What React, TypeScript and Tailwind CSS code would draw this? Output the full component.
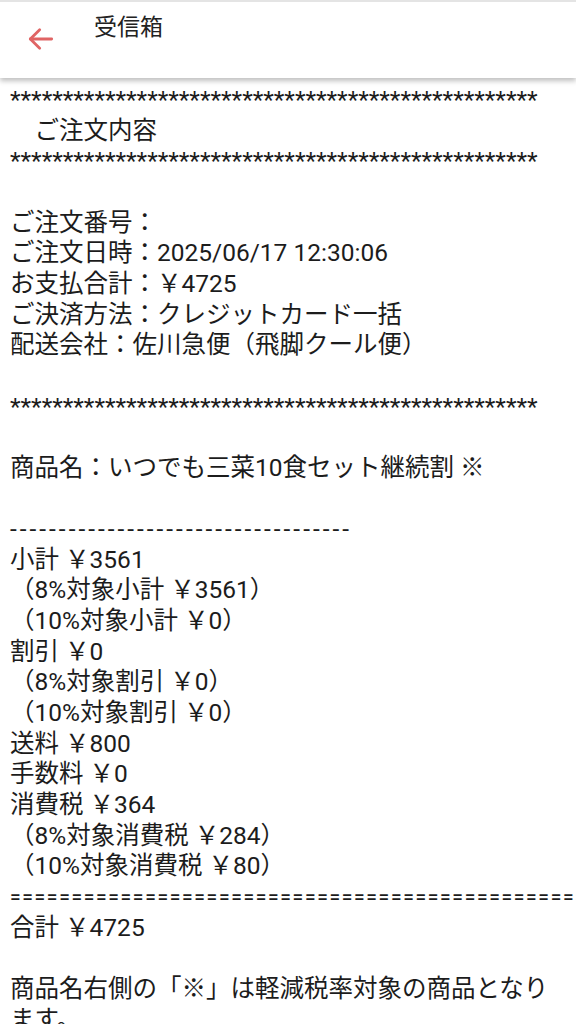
import React from "react";

const stars = "*".repeat(50);
const dashes = "-".repeat(35);
const equals = "=".repeat(52);

type L = { t: string; kind?: "stars" | "dash" | "eq" };

const lines: L[] = [
  { t: stars, kind: "stars" },
  { t: "\u3000ご注文内容" },
  { t: stars, kind: "stars" },
  { t: "" },
  { t: "ご注文番号：" },
  { t: "ご注文日時：2025/06/17 12:30:06" },
  { t: "お支払合計：￥4725" },
  { t: "ご決済方法：クレジットカード一括" },
  { t: "配送会社：佐川急便（飛脚クール便）" },
  { t: "" },
  { t: stars, kind: "stars" },
  { t: "" },
  { t: "商品名：いつでも三菜10食セット継続割 ※" },
  { t: "" },
  { t: dashes, kind: "dash" },
  { t: "小計 ￥3561" },
  { t: "（8%対象小計 ￥3561）" },
  { t: "（10%対象小計 ￥0）" },
  { t: "割引 ￥0" },
  { t: "（8%対象割引 ￥0）" },
  { t: "（10%対象割引 ￥0）" },
  { t: "送料 ￥800" },
  { t: "手数料 ￥0" },
  { t: "消費税 ￥364" },
  { t: "（8%対象消費税 ￥284）" },
  { t: "（10%対象消費税 ￥80）" },
  { t: equals, kind: "eq" },
  { t: "合計 ￥4725" },
  { t: "" },
  { t: "商品名右側の「※」は軽減税率対象の商品となります。" },
];

function cls(kind?: L["kind"]) {
  if (kind === "stars") return "whitespace-nowrap h-[30.65px]";
  if (kind === "dash") return "whitespace-nowrap h-[30.65px] tracking-[3px]";
  if (kind === "eq") return "whitespace-nowrap h-[30.65px] text-[19px] tracking-[1.6px] font-medium";
  return "whitespace-pre-wrap break-words min-h-[30.65px]";
}

export default function App() {
  return (
    <div
      className="w-[576px] h-[1024px] overflow-hidden bg-white text-[#1c1c1c]"
      style={{ fontFamily: 'Roboto, "Noto Sans CJK JP", "Noto Sans", sans-serif' }}
    >
      <header className="relative z-10 h-[78px] bg-white border-t-2 border-[#e4e4e4] shadow-[0_3px_5px_rgba(0,0,0,0.25)] flex">
        <div className="w-[82px] flex items-start pt-[21px] pl-[25px]">
          <svg width="32" height="32" viewBox="0 0 24 24" fill="none" stroke="#e06464" strokeWidth="2.1" strokeLinecap="round" strokeLinejoin="round">
            <path d="M20 12H4" />
            <path d="M11 5l-7 7 7 7" />
          </svg>
        </div>
        <div className="pt-[9px] pl-[12px] text-[23px] leading-[34px] text-[#222]">受信箱</div>
      </header>
      <div className="pt-[7px] pl-[10px] pr-[8px] text-[24.5px] leading-[30.65px]">
        {lines.map((l, i) => (
          <div key={i} className={cls(l.kind)}>
            {l.t}
          </div>
        ))}
      </div>
    </div>
  );
}
